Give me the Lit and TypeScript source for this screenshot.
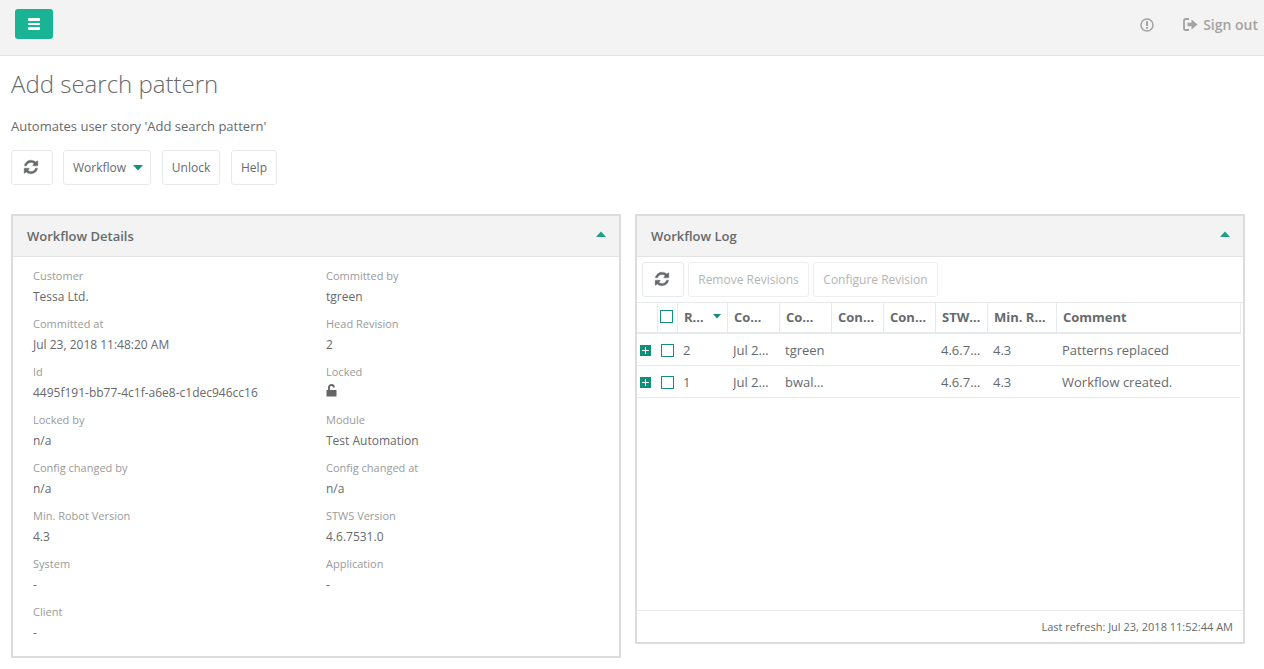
import { LitElement, html, css, svg } from 'lit';
import { customElement } from 'lit/decorators.js';

const REFRESH =
  'M1639 1056q0 5-1 7-64 268-268 434.5t-478 166.5q-146 0-282.5-55t-243.5-157l-129 129q-19 19-45 19t-45-19-19-45v-448q0-26 19-45t45-19h448q26 0 45 19t19 45-19 45l-137 137q71 66 161 102t187 36q134 0 250-65t186-179q11-17 53-117 8-23 30-23h192q13 0 22.5 9.5t9.5 22.5zm25-800v448q0 26-19 45t-45 19h-448q-26 0-45-19t-19-45 19-45l138-138q-148-137-349-137-134 0-250 65t-186 179q-11 17-53 117-8 23-30 23h-199q-13 0-22.5-9.5t-9.5-22.5v-7q65-268 270-434.5t480-166.5q146 0 284 55.5t245 156.5l130-129q19-19 45-19t45 19 19 45z';

const refresh = html`<svg class="refresh" width="16" height="16" viewBox="0 0 1792 1792" fill="currentColor">
  ${svg`<path d=${REFRESH}></path>`}
</svg>`;

const caret = (up = false) => html`<svg class="caret" width="10" height="6" viewBox="0 0 10 6">
  ${svg`<path d=${up ? 'M0 6L5 0.5L10 6Z' : 'M0 0L10 0L5 5.5Z'}></path>`}
</svg>`;

// bracket outline with an arrow, like fa-sign-out at this size
const signOut = html`<svg class="so" width="15" height="13" viewBox="0 0 15 13" fill="currentColor">
  ${svg`<path d="M6 1H2.6C1.7 1 1 1.7 1 2.6v7.8C1 11.3 1.7 12 2.6 12H6" fill="none" stroke="currentColor" stroke-width="1.8"></path>
  <path d="M4.5 4.8H8.5V1.6L14.5 6.5L8.5 11.4V8.2H4.5Z"></path>`}
</svg>`;

const unlock = html`<svg width="11" height="13" viewBox="0 0 11 13" fill="#666">
  ${svg`<path d="M0.5 6h10v6.5h-10z"></path>
  <path d="M3 6V3.4C3 2 4 1 5.4 1S7.8 2 7.8 3.4" fill="none" stroke="#666" stroke-width="1.9"></path>`}
</svg>`;

const FIELDS = [
  ['Customer', 'Tessa Ltd.'],
  ['Committed by', 'tgreen'],
  ['Committed at', 'Jul 23, 2018 11:48:20 AM'],
  ['Head Revision', '2'],
  ['Id', '4495f191-bb77-4c1f-a6e8-c1dec946cc16'],
  ['Locked', null],
  ['Locked by', 'n/a'],
  ['Module', 'Test Automation'],
  ['Config changed by', 'n/a'],
  ['Config changed at', 'n/a'],
  ['Min. Robot Version', '4.3'],
  ['STWS Version', '4.6.7531.0'],
  ['System', '-'],
  ['Application', '-'],
  ['Client', '-'],
];

const COLUMNS = [
  'Committed at',
  'Committed by',
  'Config changed',
  'Config changed at',
  'STWS Version',
  'Min. Robot Version',
  'Comment',
];

const ROWS = [
  ['2', 'Jul 23, 2018 11:48:20 AM', 'tgreen', '', '', '4.6.7531.0', '4.3', 'Patterns replaced'],
  ['1', 'Jul 23, 2018 11:40:02 AM', 'bwalker', '', '', '4.6.7531.0', '4.3', 'Workflow created.'],
];

@customElement('app-root')
export class AppRoot extends LitElement {
  static styles = css`
    :host {
      display: block;
      font-family: 'Open Sans', sans-serif;
      font-size: 13px;
      color: #676a6c;
      background: #fff;
      height: 669px;
      overflow: hidden;
    }

    .topbar {
      display: flex;
      align-items: flex-start;
      justify-content: space-between;
      box-sizing: border-box;
      height: 56px;
      background: #f3f3f3;
      border-bottom: 1px solid #e3e3e3;
      padding: 9px 6px 0 15px;
    }

    .menu {
      display: flex;
      flex-direction: column;
      justify-content: center;
      gap: 2px;
      width: 38px;
      height: 30px;
      box-sizing: border-box;
      padding: 0 13px;
      background: #1ab394;
      border-radius: 3px;
    }

    .menu span {
      height: 2.4px;
      background: #fff;
      border-radius: 1px;
    }

    .top-right {
      display: flex;
      align-items: center;
      height: 31px;
      color: #a3a3a3;
      font-size: 14px;
      font-weight: 600;
    }

    .alert {
      margin-right: 29px;
      display: block;
    }

    .so {
      margin-right: 5px;
      display: block;
    }

    main {
      padding: 0 11px;
    }

    h1 {
      margin: 0;
      padding-top: 11px;
      font-size: 24px;
      line-height: 34px;
      font-weight: 300;
      color: #676a6c;
    }

    .desc {
      margin: 16px 0 0;
      line-height: 18px;
      color: #676a6c;
      font-size: 13px;
    }

    .actions {
      display: flex;
      margin-top: 15px;
    }

    .btn {
      display: flex;
      align-items: center;
      justify-content: center;
      box-sizing: border-box;
      height: 35px;
      border: 1px solid #e7eaec;
      border-radius: 3px;
      background: #fff;
      font-size: 12px;
      color: #676a6c;
      white-space: nowrap;
    }

    .btn.ghost {
      color: #b5b5b5;
      border-color: #eee;
    }

    .btn.workflow {
      gap: 7px;
      padding-left: 2px;
    }

    .refresh {
      display: block;
      margin: 0 2px 2px 0;
      stroke: currentColor;
      stroke-width: 40;
    }

    .caret {
      fill: #138f7b;
      display: block;
      flex: none;
    }

    .panels {
      display: grid;
      grid-template-columns: 610px 610px;
      gap: 14px;
      align-items: start;
      margin-top: 29px;
    }

    .panel {
      box-sizing: border-box;
      border: 2px solid #dcdcdc;
      display: flex;
      flex-direction: column;
    }

    .panel.details {
      height: 444px;
    }

    .panel.log {
      height: 430px;
    }

    .panel-head {
      display: flex;
      align-items: center;
      justify-content: space-between;
      box-sizing: border-box;
      height: 41px;
      flex: none;
      padding: 0 13px 0 14px;
      background: #f3f3f3;
      border-bottom: 1px solid #e3e3e3;
      font-size: 13px;
      font-weight: 600;
      color: #676a6c;
    }

    .panel-head .caret {
      margin-top: -4px;
      fill: #1f9e88;
    }

    .fields {
      display: grid;
      grid-template-columns: 293px 1fr;
      grid-auto-rows: 48px;
      padding: 10px 20px 0;
    }

    .label {
      font-size: 11px;
      line-height: 18px;
      color: #9a9a9a;
    }

    .value {
      font-size: 12px;
      line-height: 18px;
      margin-top: 3px;
      color: #676a6c;
    }

    .value svg {
      display: block;
      margin-top: 2px;
    }

    .log-bar {
      display: flex;
      gap: 4px;
      padding: 5px 0 5px 5px;
      flex: none;
      border-bottom: 1px solid #e7eaec;
    }

    .row {
      display: grid;
      grid-template-columns: 21px 20px 50px 52px 52px 52px 52px 52px 69px 184px;
      flex: none;
    }

    .thead {
      height: 29px;
      border-bottom: 2px solid #e7eaec;
      box-sizing: content-box;
      font-size: 13px;
      font-weight: 700;
      width: 604px;
    }

    .thead > div {
      display: flex;
      align-items: center;
      justify-content: space-between;
      box-sizing: border-box;
      border-right: 1px solid #e7eaec;
      padding: 0 6px 2px 6px;
      min-width: 0;
    }

    .thead > div.box-cell {
      padding: 0 2px 2px 0;
      justify-content: center;
    }

    .thead .caret {
      width: 8px;
      height: 5px;
      margin-left: 9px;
    }

    .trim {
      overflow: hidden;
      text-overflow: ellipsis;
      white-space: nowrap;
      min-width: 0;
    }

    .tbody-row {
      height: 32px;
      box-sizing: border-box;
      border-bottom: 1px solid #e7eaec;
      font-size: 13px;
      width: 603px;
    }

    .tbody-row > div {
      display: flex;
      align-items: center;
      box-sizing: border-box;
      padding: 0 6px 0 5px;
      min-width: 0;
    }

    .tbody-row > div.box-cell {
      padding: 1px 2px 0 0;
      justify-content: center;
    }

    .tbody-row > div.plus-cell {
      padding: 2px 0 0 3px;
    }

    .check {
      display: block;
      box-sizing: border-box;
      width: 13px;
      height: 13px;
      border: 1px solid #138f7b;
    }

    .plus {
      position: relative;
      display: block;
      width: 11px;
      height: 11px;
      background: #0f8f7a;
    }

    .plus::before,
    .plus::after {
      content: '';
      position: absolute;
      background: #fff;
    }

    .plus::before {
      left: 2px;
      right: 2px;
      top: 4.75px;
      height: 1.5px;
    }

    .plus::after {
      top: 2px;
      bottom: 2px;
      left: 4.75px;
      width: 1.5px;
    }

    .spacer {
      flex: 1;
    }

    .log-foot {
      flex: none;
      box-sizing: border-box;
      height: 32px;
      display: flex;
      align-items: center;
      justify-content: flex-end;
      padding-right: 10px;
      border-top: 1px solid #e7eaec;
      font-size: 11px;
    }
  `;

  render() {
    return html`
      <div class="topbar">
        <div class="menu"><span></span><span></span><span></span></div>
        <div class="top-right">
          <svg class="alert" width="14" height="14" viewBox="0 0 14 14">
            ${svg`<circle cx="7" cy="7" r="6" fill="none" stroke="currentColor" stroke-width="1.5"></circle>
            <rect x="6" y="3.2" width="2" height="4.8" fill="currentColor"></rect>
            <rect x="6" y="9" width="2" height="1.8" fill="currentColor"></rect>`}
          </svg>
          ${signOut}<span>Sign out</span>
        </div>
      </div>
      <main>
        <h1>Add search pattern</h1>
        <p class="desc">Automates user story 'Add search pattern'</p>
        <div class="actions">
          <div class="btn" style="width:42px">${refresh}</div>
          <div class="btn workflow" style="width:88px;margin-left:10px">Workflow ${caret()}</div>
          <div class="btn" style="width:58px;margin-left:11px">Unlock</div>
          <div class="btn" style="width:46px;margin-left:11px">Help</div>
        </div>
        <div class="panels">
          <section class="panel details">
            <div class="panel-head">Workflow Details ${caret(true)}</div>
            <div class="fields">
              ${FIELDS.map(
                ([label, value]) => html`<div>
                  <div class="label">${label}</div>
                  <div class="value">${value ?? unlock}</div>
                </div>`
              )}
            </div>
          </section>
          <section class="panel log">
            <div class="panel-head">Workflow Log ${caret(true)}</div>
            <div class="log-bar">
              <div class="btn" style="width:42px">${refresh}</div>
              <div class="btn ghost" style="width:121px">Remove Revisions</div>
              <div class="btn ghost" style="width:125px">Configure Revision</div>
            </div>
            <div class="row thead">
              <div class="box-cell"></div>
              <div class="box-cell"><span class="check"></span></div>
              <div><span class="trim">Revision</span>${caret()}</div>
              ${COLUMNS.map((c) => html`<div><span class="trim">${c}</span></div>`)}
            </div>
            ${ROWS.map(
              (r) => html`<div class="row tbody-row">
                <div class="plus-cell"><span class="plus"></span></div>
                <div class="box-cell"><span class="check"></span></div>
                ${r.map((v) => html`<div><span class="trim">${v}</span></div>`)}
              </div>`
            )}
            <div class="spacer"></div>
            <div class="log-foot">Last refresh: Jul 23, 2018 11:52:44 AM</div>
          </section>
        </div>
      </main>
    `;
  }
}
